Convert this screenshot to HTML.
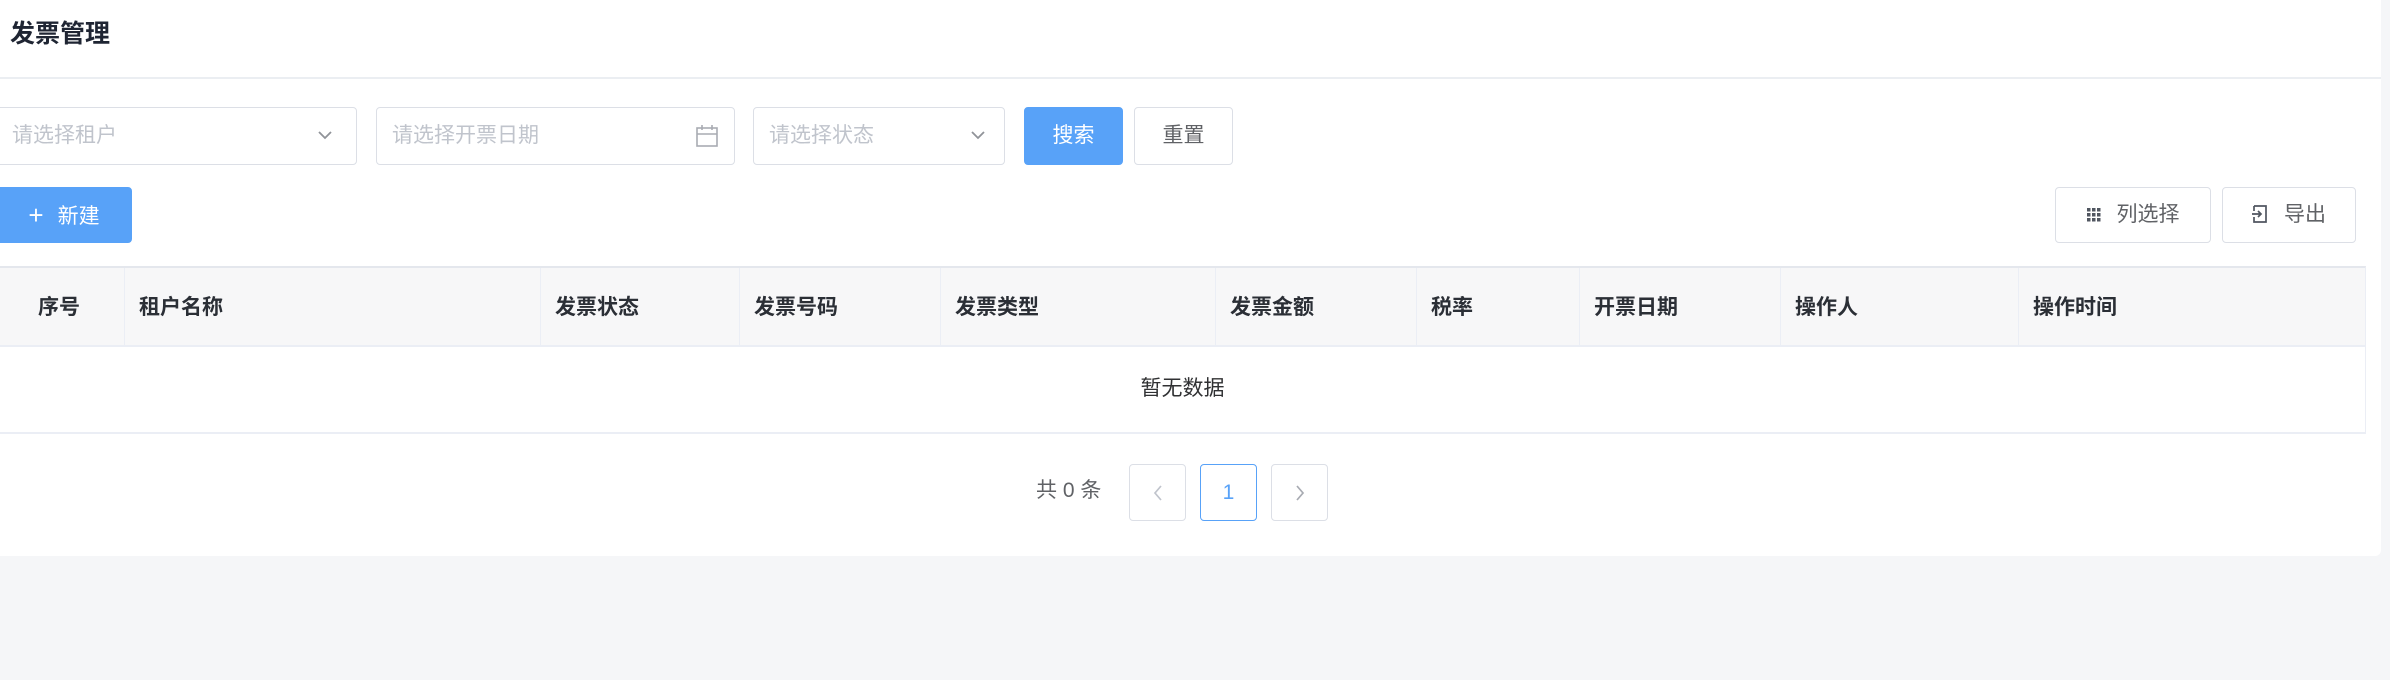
<!DOCTYPE html>
<html><head><meta charset="utf-8"><style>
*{box-sizing:border-box;margin:0;padding:0}
body{width:2390px;height:680px;background:#f5f6f8;position:relative;overflow:hidden;font-family:"Liberation Sans","Noto Sans CJK SC",sans-serif;color:#606266}
.card{position:absolute;left:0;top:0;width:2381px;height:556px;background:#fff;border-radius:0 0 6px 0}
.a{position:absolute}
.title{left:10px;top:14px;font-size:25px;font-weight:bold;color:#1f2533}
.hr{left:0;top:77px;width:2381px;height:2px;background:#ebeef2}
.inp{position:absolute;top:107px;height:58px;border:1.5px solid #dcdfe6;border-radius:4px;font-size:21px;color:#c0c4cc;line-height:55px;padding-left:15px}
.btn{position:absolute;border:1.5px solid #dcdfe6;border-radius:4px;font-size:21px;color:#606266;text-align:center;background:#fff}
.blue{background:#58a2f8;border-color:#58a2f8;color:#fff}
.th{position:absolute;top:266px;height:81px;border-top:2px solid #e4e7ed;border-bottom:2px solid #ebeef5;background:#f7f7f8}
.c{position:absolute;top:0;height:79px;border-left:1.5px solid #ebeef5;font-size:21px;font-weight:bold;color:#2b2f36;line-height:79px;padding-left:14px}
.pg{position:absolute;top:464px;width:57px;height:57px;border:1.5px solid #dcdfe6;border-radius:4px;text-align:center;line-height:55px;font-size:21px;color:#c0c4cc}
</style></head><body>
<div class="card"></div>
<div class="a title">发票管理</div>
<div class="a hr"></div>

<div class="inp" style="left:-4px;width:361px">请选择租户<svg class="a" style="left:320px;top:21px" width="16" height="12"><path d="M2 3 L8 9 L14 3" fill="none" stroke="#909399" stroke-width="1.8"/></svg></div>
<div class="inp" style="left:376px;width:359px">请选择开票日期<svg class="a" style="left:318px;top:16px" width="24" height="24"><rect x="2" y="4" width="20" height="18" fill="none" stroke="#a8abb2" stroke-width="1.6"/><line x1="2" y1="10" x2="22" y2="10" stroke="#a8abb2" stroke-width="1.6"/><line x1="7" y1="1" x2="7" y2="6" stroke="#a8abb2" stroke-width="1.6"/><line x1="17" y1="1" x2="17" y2="6" stroke="#a8abb2" stroke-width="1.6"/></svg></div>
<div class="inp" style="left:753px;width:252px">请选择状态<svg class="a" style="left:216px;top:21px" width="16" height="12"><path d="M2 3 L8 9 L14 3" fill="none" stroke="#909399" stroke-width="1.8"/></svg></div>
<div class="btn blue" style="left:1024px;top:107px;width:99px;height:58px;line-height:55px">搜索</div>
<div class="btn" style="left:1134px;top:107px;width:99px;height:58px;line-height:55px">重置</div>

<div class="btn blue" style="left:-4px;top:187px;width:136px;height:56px;line-height:53px"><span style="font-size:26px;margin-right:14px;position:relative;top:1px">+</span>新建</div>
<div class="btn" style="left:2055px;top:187px;width:156px;height:56px;line-height:53px"><svg style="margin-right:16px;vertical-align:-1px" width="14" height="14"><g fill="#505660"><rect x="0" y="0" width="3.5" height="3.5"/><rect x="5" y="0" width="3.5" height="3.5"/><rect x="10" y="0" width="3.5" height="3.5"/><rect x="0" y="5" width="3.5" height="3.5"/><rect x="5" y="5" width="3.5" height="3.5"/><rect x="10" y="5" width="3.5" height="3.5"/><rect x="0" y="10" width="3.5" height="3.5"/><rect x="5" y="10" width="3.5" height="3.5"/><rect x="10" y="10" width="3.5" height="3.5"/></g></svg>列选择</div>
<div class="btn" style="left:2222px;top:187px;width:134px;height:56px;line-height:53px"><svg style="margin-right:16px;vertical-align:-2px" width="16" height="18"><path d="M2 1 H14 V17 H2 V12 M2 6 V1" fill="none" stroke="#505660" stroke-width="1.7"/><path d="M0 9 H9 M6 6 L9 9 L6 12" fill="none" stroke="#505660" stroke-width="1.7"/></svg>导出</div>

<div class="th" style="left:0;width:2366px;border-right:1.5px solid #ebeef5">
<div class="c" style="left:-2px;width:126px;border-left:none;padding-left:40px">序号</div>
<div class="c" style="left:124px;width:416px">租户名称</div>
<div class="c" style="left:540px;width:199px">发票状态</div>
<div class="c" style="left:739px;width:201px">发票号码</div>
<div class="c" style="left:940px;width:275px">发票类型</div>
<div class="c" style="left:1215px;width:201px">发票金额</div>
<div class="c" style="left:1416px;width:163px">税率</div>
<div class="c" style="left:1579px;width:201px">开票日期</div>
<div class="c" style="left:1780px;width:238px">操作人</div>
<div class="c" style="left:2018px;width:347px">操作时间</div>
</div>
<div class="a" style="left:0;top:347px;width:2366px;height:87px;border-right:1.5px solid #ebeef5;border-bottom:2px solid #ebeef5;text-align:center;line-height:84px;font-size:21px;color:#303133">暂无数据</div>

<div class="a" style="left:1036px;top:476px;font-size:21px;color:#606266;line-height:30px">共 0 条</div>
<div class="pg" style="left:1129px"><svg width="12" height="18" style="vertical-align:-3px"><path d="M9 2 L3 9 L9 16" fill="none" stroke="#c0c4cc" stroke-width="1.7"/></svg></div>
<div class="pg" style="left:1200px;border-color:#58a2f8;color:#58a2f8">1</div>
<div class="pg" style="left:1271px"><svg width="12" height="18" style="vertical-align:-3px"><path d="M3 2 L9 9 L3 16" fill="none" stroke="#a8abb2" stroke-width="1.7"/></svg></div>
</body></html>
